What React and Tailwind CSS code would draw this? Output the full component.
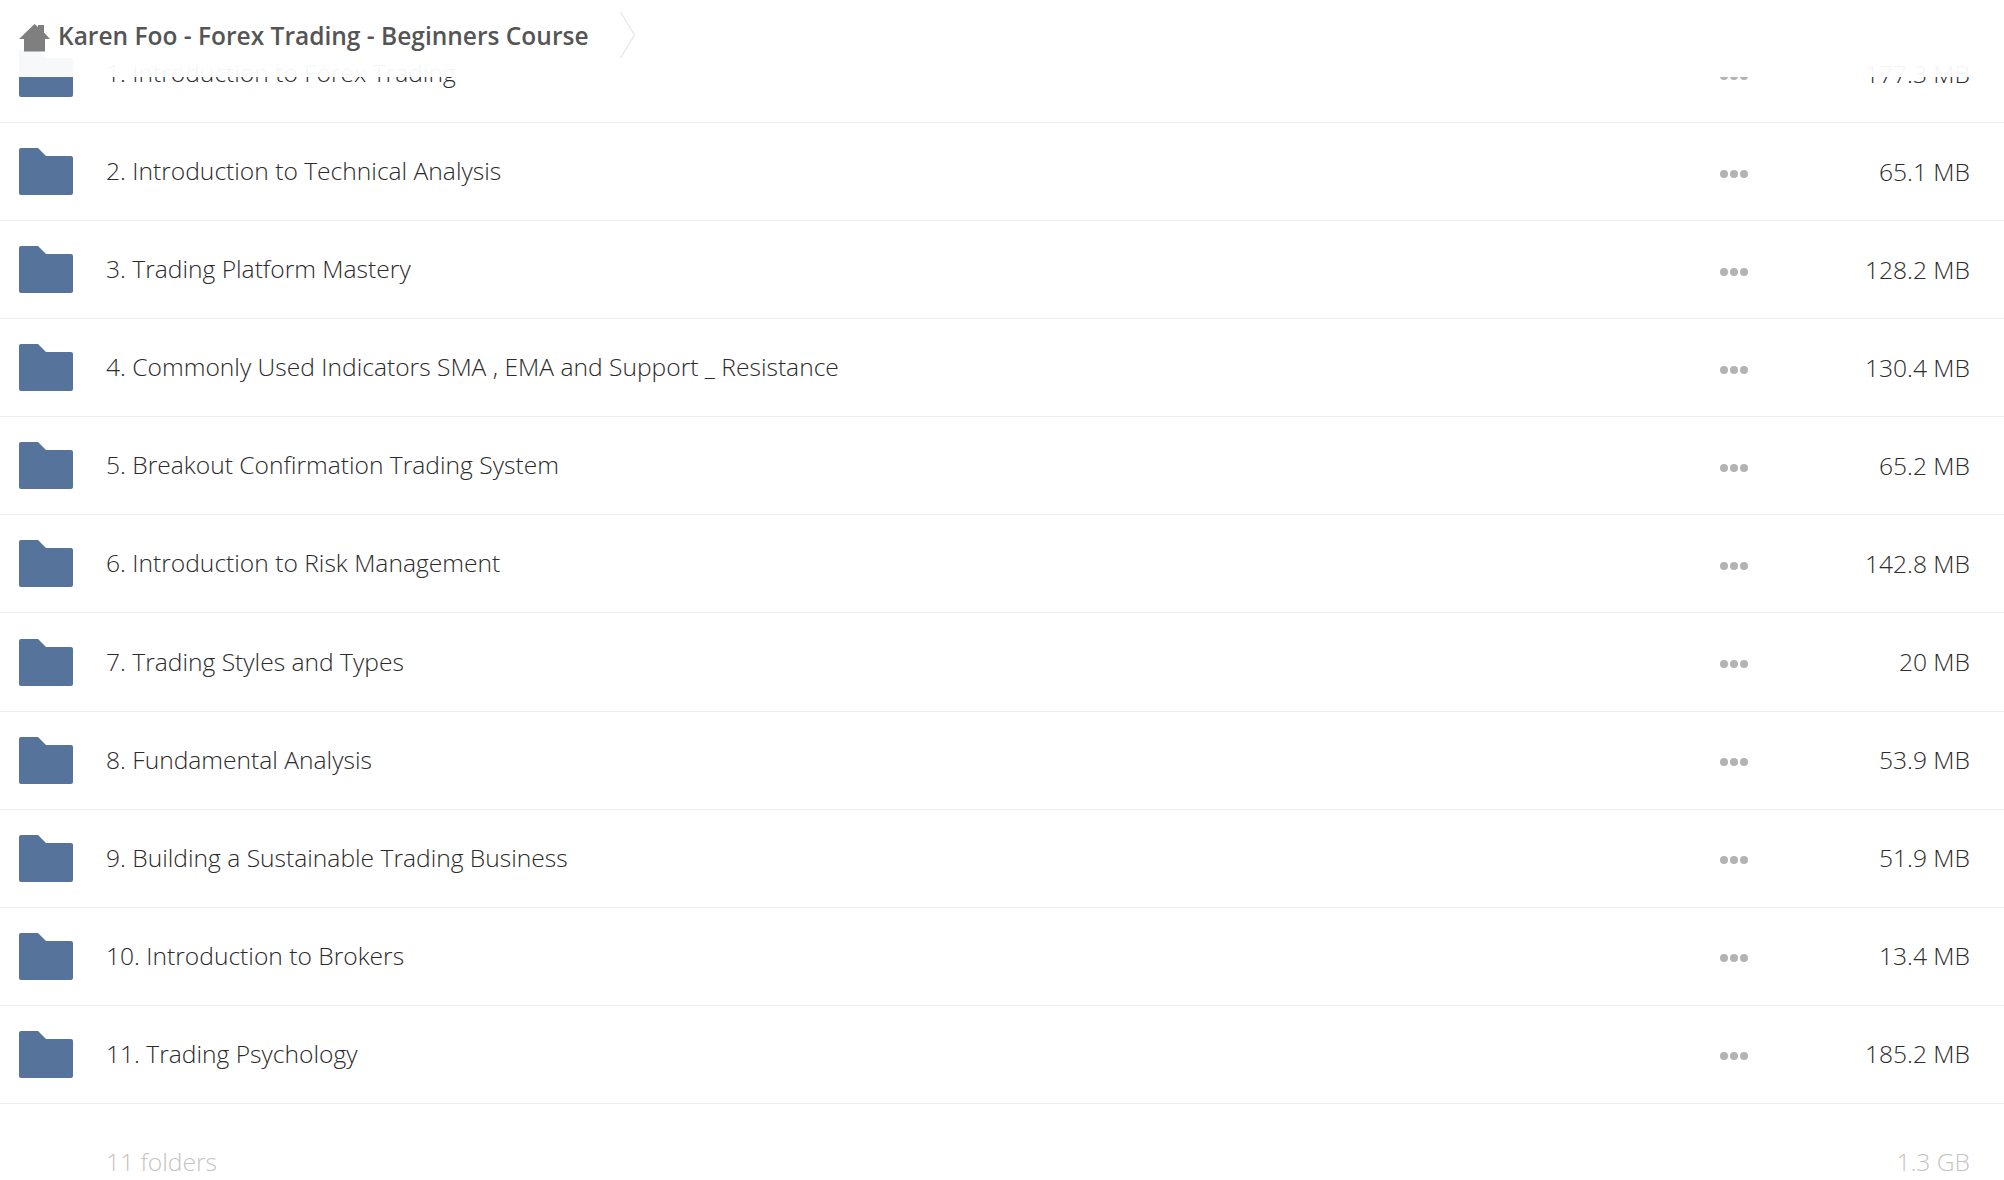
const rows = [
  ["1. Introduction to Forex Trading", "177.3 MB"],
  ["2. Introduction to Technical Analysis", "65.1 MB"],
  ["3. Trading Platform Mastery", "128.2 MB"],
  ["4. Commonly Used Indicators SMA , EMA and Support _ Resistance", "130.4 MB"],
  ["5. Breakout Confirmation Trading System", "65.2 MB"],
  ["6. Introduction to Risk Management", "142.8 MB"],
  ["7. Trading Styles and Types", "20 MB"],
  ["8. Fundamental Analysis", "53.9 MB"],
  ["9. Building a Sustainable Trading Business", "51.9 MB"],
  ["10. Introduction to Brokers", "13.4 MB"],
  ["11. Trading Psychology", "185.2 MB"],
];

function Folder() {
  return (
    <svg width="54" height="47" viewBox="0 0 54 47" className="shrink-0">
      <path d="M2 0H19L27 8H52a2 2 0 0 1 2 2V45a2 2 0 0 1-2 2H2a2 2 0 0 1-2-2V2a2 2 0 0 1 2-2Z" fill="#56739b" />
    </svg>
  );
}

export default function App() {
  return (
    <div className="relative h-[1180px] overflow-hidden bg-white font-['Open_Sans',sans-serif]">
      <div className="absolute inset-x-0 top-0 z-10 flex h-[77px] items-start bg-white/95 pl-[19px]">
        <div className="mt-[20px] flex items-center">
          <svg width="31" height="28" viewBox="0 0 31 28" className="mt-[3px] shrink-0">
            <path d="M15.5 0L19 3V1H25V8.5L31 15H26V27.5H5V15H0Z" fill="#7f7f7f" />
          </svg>
          <span className="ml-[8px] text-[24.5px] leading-[32px] font-semibold whitespace-nowrap text-[#555555]">
            Karen Foo - Forex Trading - Beginners Course
          </span>
        </div>
        <svg width="16" height="46" viewBox="0 0 16 46" className="mt-[12px] ml-[31px] shrink-0">
          <path d="M0.5 0L14.5 23L0.5 46" fill="none" stroke="#dddddd" strokeWidth="1" />
        </svg>
      </div>
      <div className="pt-[25px]">
        {rows.map(([name, size]) => (
          <div key={name} className="flex h-[98.08px] items-center border-b border-[#eeeeee] pr-[34px] pl-[19px]">
            <Folder />
            <span className="mb-[1px] ml-[33px] flex-1 text-[24.6px] leading-[36px] font-light text-[#2b2b2b]">{name}</span>
            <div className="mt-[4px] flex w-[28px] gap-[2px]">
              <span className="h-[8px] w-[8px] rounded-full bg-[#b3b3b3]" />
              <span className="h-[8px] w-[8px] rounded-full bg-[#b3b3b3]" />
              <span className="h-[8px] w-[8px] rounded-full bg-[#b3b3b3]" />
            </div>
            <span className="w-[222px] text-right text-[24.6px] leading-[36px] font-light text-[#2b2b2b]">{size}</span>
          </div>
        ))}
      </div>
      <div className="flex justify-between pt-[40px] pr-[34px] pl-[106px] text-[24.6px] leading-[36px] font-light text-[#c4c4c4]">
        <span>11 folders</span>
        <span>1.3 GB</span>
      </div>
    </div>
  );
}
